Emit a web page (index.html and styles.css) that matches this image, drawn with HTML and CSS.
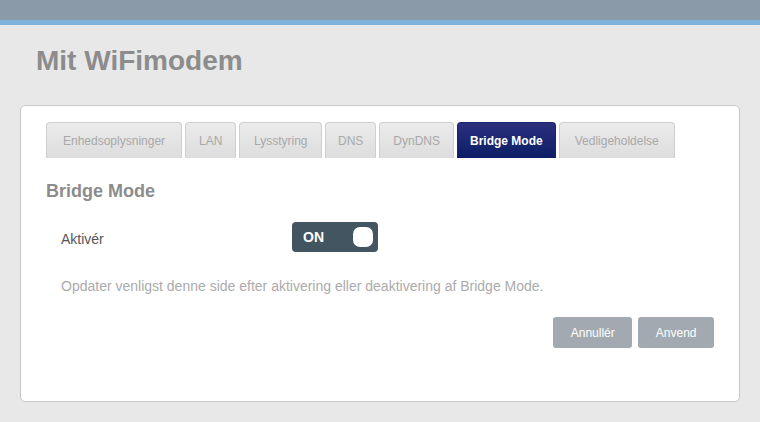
FILE: index.html
```html
<!DOCTYPE html>
<html>
<head>
	<title>Mit WiFimodem</title>
	<meta charset="utf-8">
	<meta name="viewport" content="width=device-width, initial-scale=1">

	<link rel="stylesheet" href="styles.css">
</head>
<body>

	<div class="topbar"></div>

	<h1 class="page-title">Mit WiFimodem</h1>

	<div class="card">

		<ul class="tabs">
			<li class="tab tab-first">Enhedsoplysninger</li>
			<li class="tab">LAN</li>
			<li class="tab tab-mid">Lysstyring</li>
			<li class="tab tab-narrow">DNS</li>
			<li class="tab">DynDNS</li>
			<li class="tab active">Bridge Mode</li>
			<li class="tab tab-last">Vedligeholdelse</li>
		</ul>

		<h2 class="section-title">Bridge Mode</h2>

		<div class="field">
			<span class="field-label">Aktivér</span>
			<button class="toggle">
				<span class="toggle-text">ON</span>
				<span class="toggle-knob"></span>
			</button>
		</div>

		<p class="note">Opdater venligst denne side efter aktivering eller deaktivering af Bridge Mode.</p>

		<div class="actions">
			<button class="btn">Annullér</button>
			<button class="btn">Anvend</button>
		</div>

	</div>

</body>
</html>
```

FILE: styles.css
```css
*,
*:before,
*:after {
	box-sizing: border-box;
}

body {
	margin: 0;
	background-color: #e8e8e8;
	font-family: "Liberation Sans", Arial, sans-serif;
}

.topbar {
	height: 25px;
	background-color: #8a9aa8;
	border-bottom: 5px solid #80b3dc;
}

.page-title {
	margin: 0;
	padding: 20px 0 0 36px;
	height: 80px;
	font-size: 28px;
	line-height: 32px;
	color: #8c8c8c;
}

.card {
	margin: 0 20px;
	height: 297px;
	background-color: #ffffff;
	border: 1px solid #c8c8c8;
	border-radius: 5px;
	padding: 16px 25px 0 25px;
}

.tabs {
	display: flex;
	gap: 3px;
	margin: 0;
	padding: 0;
	list-style: none;
}

.tab {
	height: 36px;
	padding: 0 13px;
	border: 1px solid #cfcfcf;
	border-bottom: 0;
	border-radius: 4px 4px 0 0;
	background: linear-gradient(#ebebeb, #dddddd);
	color: #a8a8a8;
	font-size: 12px;
	line-height: 36px;
	white-space: nowrap;
}

.tab-first {
	padding: 0 16px;
}

.tab-mid {
	padding: 0 13.5px;
}

.tab-narrow {
	padding: 0 12px;
}

.tab-last {
	padding: 0 15px;
}

.tab.active {
	padding: 0 12px;
	border-color: #1b2270;
	background: linear-gradient(#2c2f7d, #0c1e66);
	color: #ffffff;
	font-weight: bold;
}

.section-title {
	margin: 22px 0 0 0;
	font-size: 18px;
	line-height: 22px;
	color: #8c8c8c;
}

.field {
	display: flex;
	align-items: center;
	margin-top: 20px;
	padding-left: 15px;
}

.field-label {
	width: 231px;
	padding-top: 4px;
	font-size: 14px;
	color: #555555;
}

.toggle {
	display: flex;
	align-items: center;
	justify-content: space-between;
	width: 86px;
	height: 30px;
	padding: 0 5px 0 11px;
	border: 0;
	border-radius: 4px;
	background-color: #435560;
	font-family: inherit;
}

.toggle-text {
	color: #ffffff;
	font-size: 14px;
	font-weight: bold;
}

.toggle-knob {
	width: 20px;
	height: 20px;
	border-radius: 7px;
	background-color: #ffffff;
}

.note {
	margin: 25px 0 0 0;
	padding-left: 15px;
	font-size: 14px;
	line-height: 18px;
	color: #ababab;
}

.actions {
	display: flex;
	justify-content: flex-end;
	gap: 6px;
	margin-top: 22px;
	padding-right: 0;
}

.btn {
	height: 31px;
	padding: 0 17.5px;
	border: 0;
	border-radius: 3px;
	background-color: #a2a9b0;
	color: #ffffff;
	font-family: inherit;
	font-size: 12px;
}
```
